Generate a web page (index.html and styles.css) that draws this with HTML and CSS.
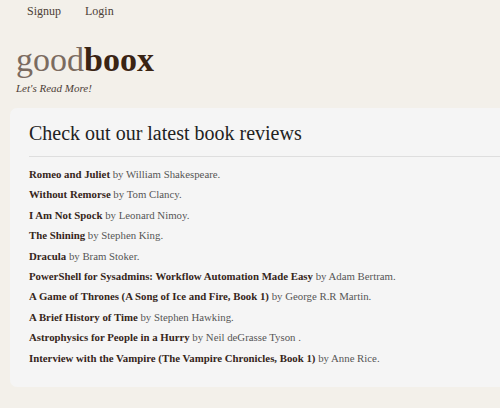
FILE: index.html
```html
<!DOCTYPE html>
<html>
<head>
<meta charset="utf-8">
<link rel="stylesheet" href="styles.css">
</head>
<body>
<nav class="nav">
  <a class="nav-link" href="#">Signup</a>
  <a class="nav-link" href="#">Login</a>
</nav>
<header class="brand">
  <div class="logo"><span class="logo-light">good</span><span class="logo-bold">boox</span></div>
  <div class="tagline">Let's Read More!</div>
</header>
<main class="card">
  <h1 class="card-title">Check out our latest book reviews</h1>
  <hr class="divider">
  <ul class="books">
    <li><b>Romeo and Juliet</b> by William Shakespeare.</li>
    <li><b>Without Remorse</b> by Tom Clancy.</li>
    <li><b>I Am Not Spock</b> by Leonard Nimoy.</li>
    <li><b>The Shining</b> by Stephen King.</li>
    <li><b>Dracula</b> by Bram Stoker.</li>
    <li><b>PowerShell for Sysadmins: Workflow Automation Made Easy</b> by Adam Bertram.</li>
    <li><b>A Game of Thrones (A Song of Ice and Fire, Book 1)</b> by George R.R Martin.</li>
    <li><b>A Brief History of Time</b> by Stephen Hawking.</li>
    <li><b>Astrophysics for People in a Hurry</b> by Neil deGrasse Tyson .</li>
    <li><b>Interview with the Vampire (The Vampire Chronicles, Book 1)</b> by Anne Rice.</li>
  </ul>
</main>
</body>
</html>
```
FILE: styles.css
```css
html, body {
  margin: 0;
  padding: 0;
}
body {
  background: #f3f0ea;
  font-family: "Liberation Serif", "Times New Roman", serif;
  color: #4a4a4a;
  width: 520px;
}
.nav {
  display: flex;
  gap: 24px;
  padding: 4px 0 0 27px;
  height: 24px;
}
.nav-link {
  font-size: 12px;
  color: #4d4036;
  text-decoration: none;
}
.brand {
  padding: 12px 16px 0;
}
.logo {
  font-size: 34px;
  line-height: 40px;
}
.logo-light {
  color: #7b6b60;
}
.logo-bold {
  color: #3a2414;
  font-weight: bold;
}
.tagline {
  font-style: italic;
  font-size: 11px;
  color: #4d4036;
  margin-top: 2px;
}
.card {
  margin: 14px 0 0 10px;
  background: #f5f5f5;
  border-radius: 7px;
  padding: 12px 0 22px 19px;
}
.card-title {
  margin: 0;
  font-size: 20px;
  font-weight: normal;
  color: #222;
  line-height: 26px;
}
.divider {
  border: 0;
  border-top: 1px solid #dedede;
  margin: 10px 0 10px;
}
.books {
  list-style: none;
  margin: 0;
  padding: 0;
  display: flex;
  flex-direction: column;
  gap: 6px;
}
.books li {
  font-size: 10.8px;
  line-height: 14.4px;
  color: #555;
}
.books b {
  color: #35261a;
}
```
